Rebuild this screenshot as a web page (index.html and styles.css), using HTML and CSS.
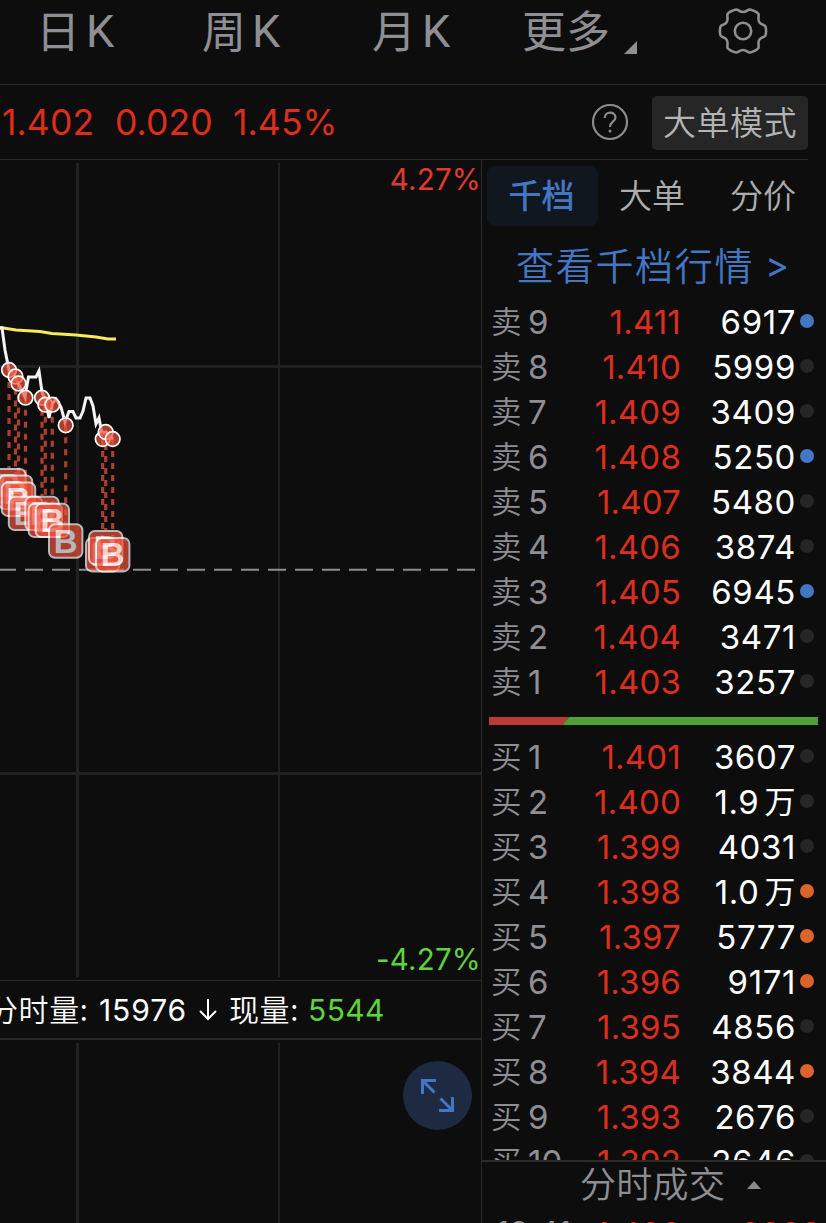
FILE: index.html
```
<!DOCTYPE html>
<html lang="zh-CN">
<head>
<meta charset="utf-8">
<title>分时</title>
<link rel="stylesheet" href="styles.css">
</head>
<body>
<nav class="periods">
  <span class="period p-day">日<b>K</b></span>
  <span class="period p-week">周<b>K</b></span>
  <span class="period p-month">月<b>K</b></span>
  <span class="period p-more">更多<svg class="corner" width="13" height="13"><path d="M13 0V13H0Z"/></svg></span>
  <svg class="gear" width="50" height="46" viewBox="0 0 50 46"><path d="M18 1.500C21 1.500 21 4 25 4S29 1.500 32 1.500Q38 3 40.500 6C41 10 39.500 12 41.500 14.500S46.500 16.500 47.500 18.500Q48.700 23 47.500 27.500C46.500 29.500 43.500 29 41.500 31.500S41 36 40.500 40Q38 43 32 44.500C29 44.500 29 42 25 42S21 44.500 18 44.500Q12 43 9.500 40C9 36 10.500 34 8.500 31.500S3.500 29.500 2.500 27.500Q1.300 23 2.500 18.500C3.500 16.500 6.500 17 8.500 14.500S9 10 9.500 6Q12 3 18 1.500Z"/><circle cx="25" cy="23" r="8.200"/></svg>
</nav>
<header class="quote">
  <span class="q1">1.402</span><span class="q2">0.020</span><span class="q3">1.45%</span>
  <svg class="help" width="38" height="38" viewBox="0 0 38 38"><circle cx="19" cy="19" r="17"/><path d="M13.700 15C13.700 8 24.500 8 24.500 14.500C24.500 18.500 19 18.500 19 24"/><circle class="pt" cx="19" cy="28" r="1.500"/></svg>
  <button class="mode">大单模式</button>
</header>
<main class="body">
  <section class="left">
    <div class="chart">
      <svg id="plot" width="481" height="820" viewBox="0 160 481 820"></svg>
      <span class="pct up">4.27%</span>
      <span class="pct down">-4.27%</span>
    </div>
    <div class="volinfo"><span class="v1">分时量:</span><span class="v2">15976</span><svg class="arrow" width="20" height="24"><path d="M10 1V21M2 13L10 21L18 13"/></svg><span class="v3">现量:</span><span class="v4">5544</span></div>
    <div class="volume">
      <i class="g1"></i><i class="g2"></i>
      <svg class="expand" width="70" height="70" viewBox="0 0 70 70"><circle cx="34.500" cy="34.500" r="34.500"/><path d="M19.500 33V19.500H33M20 20L31.500 31.500M49.500 36V49.500H36M49 49L37.500 37.500"/></svg>
    </div>
  </section>
  <aside class="book">
    <div class="tabs"><span class="tab on">千档</span><span class="tab t2">大单</span><span class="tab t3">分价</span></div>
    <a class="link">查看千档行情<span class="gt">&gt;</span></a>
    <div class="depth">
      <div id="asks"></div>
      <svg class="ratio" width="329" height="8"><path class="buy" d="M0 0H80L73 8H0Z"/><path class="sell" d="M80 0H329V8H73Z"/></svg>
      <div id="bids"></div>
    </div>
    <div class="deals">分时成交<svg class="tri" width="16" height="10"><path d="M8 1L15 9H1Z"/></svg></div>
    <div class="tick"><span class="tt">13:41</span><span class="tp">1.402</span><span class="tv">2328</span></div>
  </aside>
</main>
<script src="app.js"></script>
</body>
</html>
```
FILE: styles.css
```
* { box-sizing: border-box; }
body { margin: 0; width: 826px; height: 1223px; overflow: hidden; background: #0d0d0d; color: #8e8e93; font-family: Inter, "Noto Sans CJK SC", sans-serif; white-space: nowrap; }
svg { display: block; flex: none; }
.periods { height: 85px; border-bottom: 1px solid #2b2b2b; display: flex; padding-left: 36px; font-size: 44px; line-height: 58px; font-weight: 400; }
.period { display: flex; height: 62px; font-family: "Noto Sans CJK SC", sans-serif; }
.period b { font: 400 45px/63px Roboto, sans-serif; margin-left: 6px; }
.p-day { width: 166px; }
.p-week { width: 170px; }
.p-month { width: 150px; }
.p-more { width: 196px; }
.corner { margin: 41px 0 0 14px; fill: #8e8e93; }
.gear { margin-top: 8px; fill: none; stroke: #8e8e93; stroke-width: 2.6; }
.quote { height: 75px; width: 808px; border-bottom: 1px solid #2b2b2b; display: flex; align-items: center; color: #dc2d1e; font-size: 35.5px; }
.quote span { flex: none; letter-spacing: 0.1px; font-weight: 400; }
.q1 { width: 115px; padding-left: 2px; }
.q2 { width: 118px; }
.q3 { width: 358px; }
.help { fill: none; stroke: #8c8c8c; stroke-width: 2.2; }
.help .pt { fill: #8c8c8c; stroke: none; }
.mode { margin: 2px 0 0 auto; width: 156px; height: 54px; border: 0; border-radius: 5px; padding: 0 0 3px; background: #262626; color: #b4b4b4; font: 350 33px/51px "Noto Sans CJK SC", sans-serif; letter-spacing: 0.5px; }
.body { display: flex; height: 1063px; }
.left { width: 482px; border-right: 1px solid #2b2b2b; }
.chart { position: relative; height: 821px; border-bottom: 1px solid #2b2b2b; overflow: hidden; }
.pct { position: absolute; right: 0; font-size: 29.5px; line-height: 36px; letter-spacing: 0.2px; font-weight: 400; }
.up { top: 1px; color: #e03a30; }
.down { top: 781px; color: #5cd43a; }
.volinfo { height: 59px; border-bottom: 2px solid #262626; display: flex; align-items: center; overflow: hidden; color: #fff; font-size: 29px; font-weight: 400; }
.volinfo .v1, .volinfo .v3 { font-family: "Noto Sans CJK SC", sans-serif; font-size: 30px; font-weight: 350; letter-spacing: 0.6px; line-height: 56px; padding-bottom: 3px; }
.v1 { margin-left: -12px; width: 111px; flex: none; }
.v2 { width: 99px; font-size: 30px; letter-spacing: 0.9px; }
.v3 { margin-left: 11px; width: 79px; }
.v4 { color: #5cd43a; font-size: 30px; letter-spacing: 0.4px; }
.arrow { fill: none; stroke: #fff; stroke-width: 2; }
.volume { height: 183px; padding-top: 3px; display: flex; }
.g1 { margin-left: 76px; width: 3px; background: #212121; }
.g2 { margin-left: 199px; width: 2px; background: #212121; }
.expand { margin: 18px 0 0 123px; fill: #1d2a42; }
.expand path { fill: none; stroke: #4377c4; stroke-width: 3; }
.book { width: 344px; display: flex; flex-direction: column; }
.tabs { height: 72px; padding: 6px 0 0 5px; display: flex; font: 350 33px/56px "Noto Sans CJK SC", sans-serif; color: #adadad; flex: none; }
.tab { height: 60px; }
.on { width: 111px; text-align: center; background: #11171f; border-radius: 8px; color: #4377c4; font-weight: 500; padding-right: 2px; }
.t2 { margin-left: 21px; width: 111px; }
.link { display: flex; height: 67px; flex: none; padding-left: 34px; font: 350 38px/64px "Noto Sans CJK SC", sans-serif; letter-spacing: 1.7px; color: #4377c4; }
.gt { font: 400 36px/67px Inter; margin-left: 11px; }
.depth { height: 861px; overflow: hidden; flex: none; }
.row { display: flex; height: 45px; align-items: center; font-size: 33px; font-weight: 400; padding-left: 9px; }
.side { font: 350 30.5px/40px "Noto Sans CJK SC", sans-serif; width: 37px; padding-bottom: 4px; }
.lvl { width: 60px; }
.price { width: 93px; text-align: right; color: #dc2d1e; letter-spacing: 0.2px; }
.qty { width: 115px; display: flex; justify-content: flex-end; color: #fff; letter-spacing: 0.6px; }
.unit { font: 400 31px/36px "Noto Sans CJK SC", sans-serif; margin-left: 5px; }
.dot { width: 14px; height: 14px; border-radius: 50%; background: #262626; margin: 0 0 2px 4px; }
.blue { background: #4377c4; }
.orange { background: #dc632a; }
.ratio { margin: 13px 0 9px 7px; }
.buy { fill: #b83b35; }
.sell { fill: #4ba233; }
.deals { height: 60px; flex: none; display: flex; align-items: center; border-top: 2px solid #2b2b2b; padding: 0 0 17px 98px; font: 350 36px/41px "Noto Sans CJK SC", sans-serif; letter-spacing: 0.3px; }
.tri { margin: 5px 0 0 21px; fill: #8c8c8c; }
.tick { display: flex; font-size: 33px; line-height: 40px; height: 40px; margin-top: -6px; padding-left: 14px; flex: none; }
.tt { width: 100px; font-size: 32px; }
.tp { width: 144px; color: #dc2d1e; }
.tv { color: #dc2d1e; }
.grid { stroke: #212121; fill: none; }
.zero { stroke: #8e8e93; stroke-width: 2; stroke-dasharray: 18 9; stroke-dashoffset: 2; }
.avg { stroke: #f8ea5a; stroke-width: 3; fill: none; }
.line { stroke: #f4f4f4; stroke-width: 3; fill: none; stroke-linejoin: miter; }
.stem { stroke: #ac3e2d; stroke-width: 3.2; stroke-dasharray: 6 6; }
.mark { fill: #ee523c; fill-opacity: 0.7; stroke: #fff; stroke-width: 1.7; }
.badge { opacity: 0.7; }
.badge rect { fill: #ee523c; stroke: #fff; stroke-width: 2; }
.badge text { fill: #fff; font: bold 33px "Liberation Sans", sans-serif; text-anchor: middle; }
```
FILE: app.js
```
const asks = [[9,'1.411','6917','blue'],[8,'1.410','5999',''],[7,'1.409','3409',''],[6,'1.408','5250','blue'],[5,'1.407','5480',''],[4,'1.406','3874',''],[3,'1.405','6945','blue'],[2,'1.404','3471',''],[1,'1.403','3257','']];
const bids = [[1,'1.401','3607',''],[2,'1.400','1.9 万',''],[3,'1.399','4031',''],[4,'1.398','1.0 万','orange'],[5,'1.397','5777','orange'],[6,'1.396','9171','orange'],[7,'1.395','4856',''],[8,'1.394','3844','orange'],[9,'1.393','2676',''],[10,'1.392','2646','']];
const rows = (side, list) => list.map(([n, p, q, c]) =>
  `<div class="row"><span class="side">${side}</span><span class="lvl">${n}</span><span class="price">${p}</span><span class="qty">${q.replace(' 万', '<span class="unit">万</span>')}</span><i class="dot ${c}"></i></div>`).join('');
document.getElementById('asks').innerHTML = rows('卖', asks);
document.getElementById('bids').innerHTML = rows('买', bids);

// Trade markers: each dot on the line has a stem down to its badge.
const marks = [[9,370],[15.5,376.5],[18.5,383.5],[25.5,397.7],[42,397.7],[45.3,404.7],[52.3,404.7],[65.7,425.3],[102.7,439],[105.7,432],[112.7,439]];
const drop = 115.7;
let s = '<path class="grid" stroke-width="3" d="M77.5 163V977M0 366.500H481M0 773.500H481"/><path class="grid" stroke-width="2" d="M279 163V977"/>';
s += '<path class="zero" d="M0 569.700H475"/>';
s += marks.map(([x, y]) => `<path class="stem" d="M${x} ${y}V${y + 98}"/>`).join('');
s += '<path class="avg" d="M0 327.500L16 330L40 331.500L52 333.500L76 335L96 337L108 339H116"/>';
s += '<path class="line" d="M0 328H2L5 350L9 370L15 376L18 383L25 397L28.500 377H36L39 371L42 392L46 402L49 418L52 404L56 399L61 407L65 422L69 411.500H73L76 418H80L83 411L86 398H90L93 406L96 424L99 418L102 434L106 432L113 439"/>';
s += marks.map(([x, y]) => `<circle class="mark" cx="${x}" cy="${y}" r="7.3"/>`).join('');
s += marks.map(([x, y]) => `<g class="badge"><rect x="${x - 16.7}" y="${y + drop - 16.7}" width="33.4" height="33.4" rx="6"/><text x="${x}" y="${y + drop + 11.5}">B</text></g>`).join('');
document.getElementById('plot').innerHTML = s;
```
